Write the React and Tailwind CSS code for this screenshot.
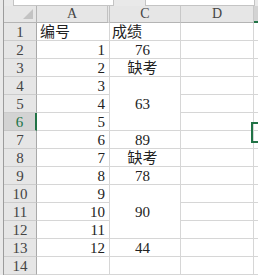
import React from 'react';

const serif = { fontFamily: '"Liberation Serif", "Noto Sans CJK SC", serif' };

// C column: span = merged cells (vertical centre), skip = covered by a merge
const rows = [
  { n: 1, a: '编号', aLeft: true, c: '成绩', cLeft: true },
  { n: 2, a: '1', c: '76' },
  { n: 3, a: '2', c: '缺考' },
  { n: 4, a: '3', c: '63', span: 3 },
  { n: 5, a: '4', skip: true },
  { n: 6, a: '5', skip: true, active: true },
  { n: 7, a: '6', c: '89' },
  { n: 8, a: '7', c: '缺考' },
  { n: 9, a: '8', c: '78' },
  { n: 10, a: '9', c: '90', span: 3 },
  { n: 11, a: '10', skip: true },
  { n: 12, a: '11', skip: true },
  { n: 13, a: '12', c: '44' },
  { n: 14, a: '', c: '' },
];

export default function App() {
  return (
    <div className="relative w-[258px] h-[275px] overflow-hidden bg-white flex text-[#222]" style={serif}>
      {/* left window edge */}
      <div className="w-[4px] h-full bg-[#e9e9e9] border-r border-[#9c9c9c]" />

      <div className="w-[254px] flex flex-col">
        {/* formula bar remnants */}
        <div className="h-[17px] bg-[#e9e9e9] flex items-start">
          <div className="ml-[9px] w-[101px] h-[6px] bg-white border border-t-0 border-[#c4c4c4]" />
          <div className="ml-[31px] w-[110px] h-[6px] bg-white border border-t-0 border-[#c4c4c4]" />
        </div>

        <div className="grid grid-cols-[33px_73px_71px_73px_4px] grid-rows-[17px] auto-rows-[18px]">
          {/* column headers */}
          <div className="relative bg-[#e6e6e6] border-r border-b border-[#b4b4b4]">
            <div className="absolute right-[3px] bottom-[3px] w-0 h-0 border-l-[10px] border-l-transparent border-b-[10px] border-b-[#c3c3c3]" />
          </div>
          <div className="bg-[#e6e6e6] border-b border-b-[#b4b4b4] border-r-[3px] border-r-[#c2c2c2] border-double flex items-center justify-center text-[14px] text-[#444] leading-none">A</div>
          <div className="bg-[#e6e6e6] border-b border-r border-b-[#b4b4b4] border-r-[#c8c8c8] flex items-center justify-center text-[14px] text-[#444] leading-none">C</div>
          <div className="bg-[#e6e6e6] border-b border-r border-b-[#b4b4b4] border-r-[#c8c8c8] flex items-center justify-center text-[14px] text-[#444] leading-none">D</div>
          <div className="bg-[#d3d3d3] border-b-2 border-[#217346]" />

          {rows.map((r) => (
            <React.Fragment key={r.n}>
              <div
                className={
                  r.active
                    ? 'bg-[#d3d3d3] border-b border-b-[#c6c6c6] border-r-2 border-r-[#217346] flex items-center justify-center text-[15px] text-[#217346] leading-none'
                    : 'bg-[#e6e6e6] border-b border-r border-b-[#cccccc] border-r-[#a9a9a9] flex items-center justify-center text-[15px] text-[#444] leading-none'
                }
              >
                <span className="mt-[1px]">{r.n}</span>
              </div>
              <div
                className={
                  'border-r border-b border-[#d6d6d6] flex items-center text-[15px] leading-none ' +
                  (r.aLeft ? 'justify-start pl-[3px]' : 'justify-end pr-[4px]')
                }
              >
                <span className="mt-[1px]">{r.a}</span>
              </div>
              {!r.skip && (
                <div
                  className={
                    'border-r border-b border-[#d6d6d6] flex items-center text-[15px] leading-none bg-white ' +
                    (r.span ? 'row-span-3 ' : '') +
                    (r.cLeft ? 'justify-start pl-[2px]' : 'justify-center pr-[5px]')
                  }
                >
                  <span className="mt-[1px]">{r.c}</span>
                </div>
              )}
              <div className="border-r border-b border-[#d6d6d6]" />
              <div className="border-b border-[#d6d6d6]" />
            </React.Fragment>
          ))}
        </div>
      </div>

      {/* selected cell E6 */}
      <div className="absolute left-[251px] top-[122px] w-[12px] h-[21px] border-2 border-[#217346]" />
    </div>
  );
}
